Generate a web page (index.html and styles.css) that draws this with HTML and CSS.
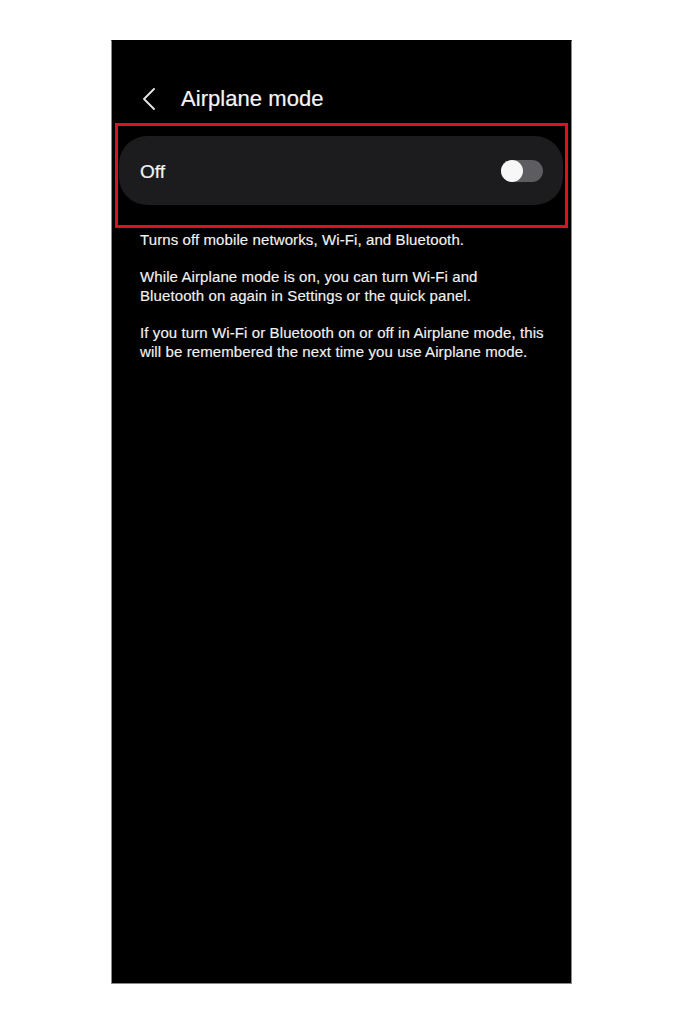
FILE: index.html
```html
<!DOCTYPE html>
<html lang="en">
<head>
<meta charset="utf-8">
<title>Airplane mode</title>
<link rel="stylesheet" href="styles.css">
</head>
<body>
<div class="phone">
  <header class="header">
    <svg class="back" width="14" height="22" viewBox="0 0 14 22" aria-hidden="true">
      <path d="M12 1 L2 11 L12 21" fill="none" stroke="#e6e6e6" stroke-width="1.8" stroke-linecap="round" stroke-linejoin="round"/>
    </svg>
    <h1 class="title">Airplane mode</h1>
  </header>
  <div class="highlight">
    <div class="card">
      <span class="card-label">Off</span>
      <span class="switch"><span class="knob"></span></span>
    </div>
  </div>
  <div class="desc">
    <p>Turns off mobile networks, Wi-Fi, and Bluetooth.</p>
    <p>While Airplane mode is on, you can turn Wi-Fi and<br>Bluetooth on again in Settings or the quick panel.</p>
    <p>If you turn Wi-Fi or Bluetooth on or off in Airplane mode, this<br>will be remembered the next time you use Airplane mode.</p>
  </div>
</div>
</body>
</html>
```

FILE: styles.css
```css
html, body {
  margin: 0;
  padding: 0;
  background: #ffffff;
}

body {
  font-family: "Liberation Sans", Arial, sans-serif;
  padding-top: 40px;
}

.phone {
  box-sizing: border-box;
  width: 461px;
  height: 944px;
  margin: 0 auto;
  background: #000000;
  border: 1px solid #8a8a8a;
  border-top-color: #000;
  overflow: hidden;
}

.header {
  display: flex;
  align-items: center;
  height: 32px;
  padding: 42px 0 0 30px;
}

.back {
  display: block;
  flex: none;
}

.title {
  margin: 0 0 0 25px;
  font-size: 22px;
  line-height: 32px;
  font-weight: normal;
  color: #f4f4f4;
  letter-spacing: 0.05px;
  -webkit-text-stroke: 0.2px #f4f4f4;
}

.highlight {
  margin: 8px 3px 0 3px;
  border: 3px solid #d8141c;
  padding: 10px 2px 20px 1px;
}

.card {
  display: flex;
  align-items: center;
  justify-content: space-between;
  height: 69px;
  padding: 2px 20px 0 21px;
  box-sizing: border-box;
  background: #1c1c1e;
  border-radius: 28px;
}

.card-label {
  font-size: 19px;
  line-height: 22px;
  color: #f4f4f4;
  -webkit-text-stroke: 0.2px #f4f4f4;
}

.switch {
  position: relative;
  display: block;
  width: 42px;
  height: 22px;
  margin-top: -2px;
  border-radius: 11px;
  background: #5c5c61;
}

.knob {
  position: absolute;
  left: 0;
  top: 0;
  width: 22px;
  height: 22px;
  border-radius: 50%;
  background: #f7f7f7;
}

.desc {
  margin-top: 3px;
  padding-left: 28px;
  font-size: 15px;
  line-height: 18.6px;
  letter-spacing: 0.1px;
  color: #f2f2f2;
  -webkit-text-stroke: 0.15px #f2f2f2;
}

.desc p {
  margin: 0 0 18.6px 0;
}
```
